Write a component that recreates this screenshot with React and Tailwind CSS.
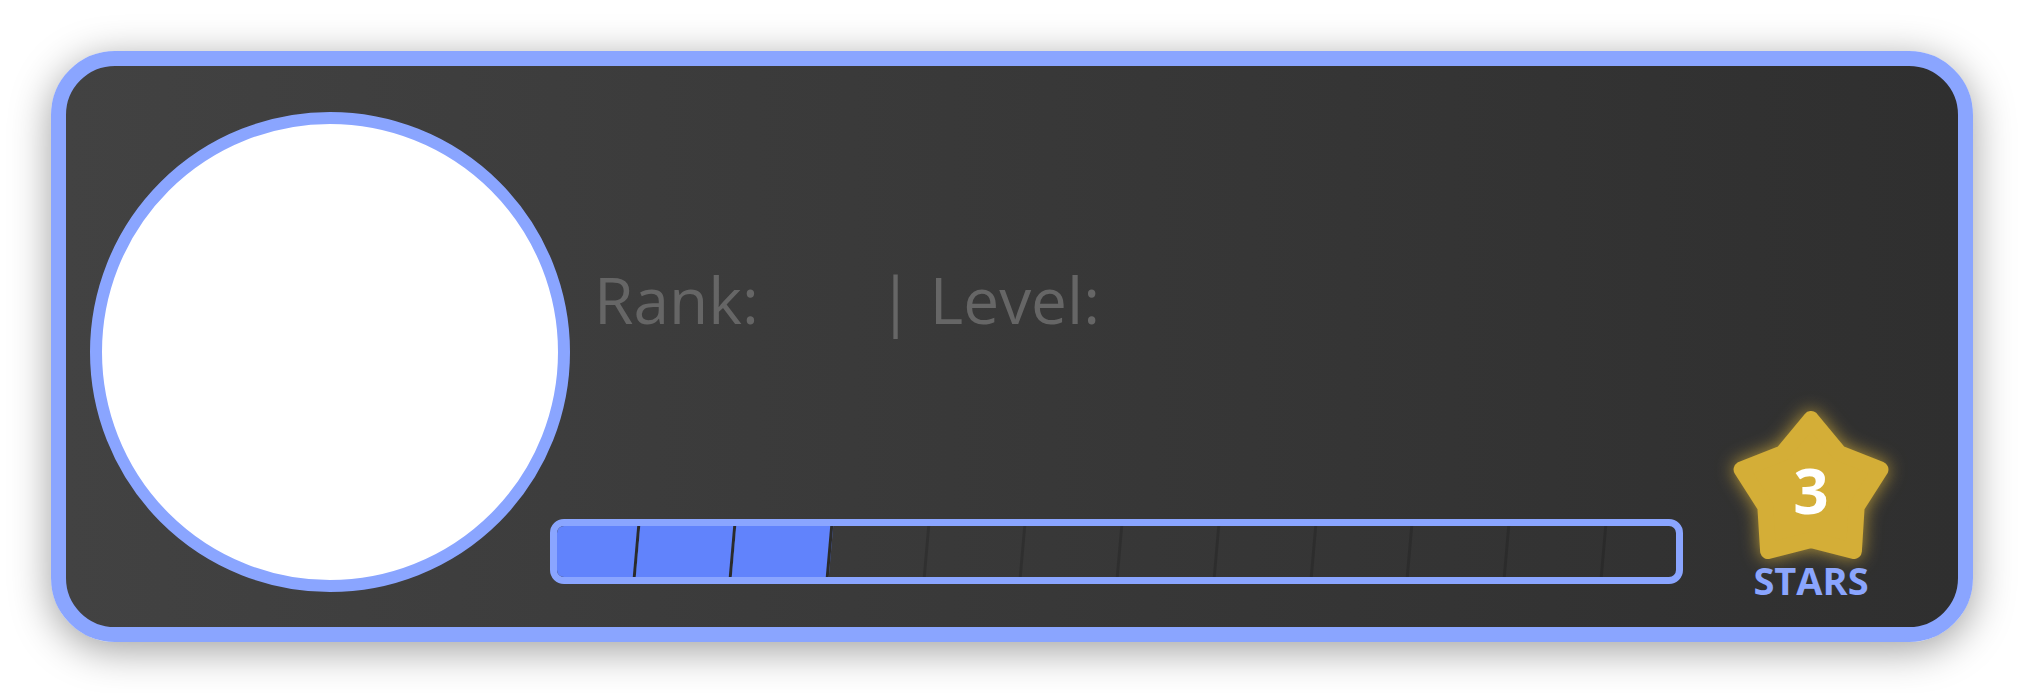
import React from "react";

// rounded five point star, points computed around (0,0)
function starPoints(outer, inner) {
  const pts = [];
  for (let i = 0; i < 10; i++) {
    const a = (i * 36 * Math.PI) / 180;
    const r = i % 2 === 0 ? outer : inner;
    pts.push(`${(Math.sin(a) * r).toFixed(2)},${(-Math.cos(a) * r).toFixed(2)}`);
  }
  return pts.join(" ");
}

function StarBadge({ count }) {
  return (
    <div className="flex flex-col items-center">
      <div className="relative w-[160px] h-[150px]">
        <svg
          width="160"
          height="150"
          viewBox="-80 -83 160 150"
          className="drop-shadow-[0_0_9px_rgba(222,182,58,0.75)]"
        >
          <polygon
            points={starPoints(73, 48)}
            fill="#d4ae37"
            stroke="#d4ae37"
            strokeWidth="16"
            strokeLinejoin="round"
          />
        </svg>
        <div className="absolute left-0 right-0 top-[50px] text-center text-white font-bold text-[62px] leading-none font-['Open_Sans',sans-serif]">
          {count}
        </div>
      </div>
      <div className="mt-[2px] text-[38px] leading-none font-bold text-[#8aa5ff] font-['Open_Sans',sans-serif]">
        STARS
      </div>
    </div>
  );
}

function ProgressBar({ filled, total }) {
  const segments = Array.from({ length: total });
  return (
    <div className="w-[1133px] h-[65px] border-[7px] border-[#8aa5ff] rounded-[14px] overflow-hidden">
      <div className="flex h-full ml-[-16px] -skew-x-5">
        {segments.map((_, i) => (
          <div
            key={i}
            className={
              i < filled
                ? "shrink-0 w-[96.7px] h-full bg-[#6183fc] border-r-[3px] border-[#2b2b2b]"
                : "shrink-0 w-[96.7px] h-full border-r-[3px] border-black/15"
            }
          />
        ))}
      </div>
    </div>
  );
}

export default function App() {
  return (
    <div className="min-h-screen bg-white p-[51px] font-['Open_Sans',sans-serif]">
      <div className="h-[591px] border-[15px] border-[#8aa5ff] rounded-[64px] bg-linear-to-r from-[#424242] to-[#2f2f2f] shadow-[0_8px_40px_rgba(0,0,0,0.38)] overflow-hidden">
        <div className="flex items-start h-full">
          {/* avatar */}
          <div className="ml-[24px] mt-[46px] shrink-0 w-[480px] h-[480px] rounded-full border-[12px] border-[#8aa5ff] bg-white" />

          {/* rank / level + xp bar */}
          <div className="ml-[-20px] w-[1133px] shrink-0 flex flex-col">
            <div className="mt-[202px] pl-[44px] text-[64px] leading-none text-[#666666] whitespace-nowrap">
              <span className="inline-block w-[284px]">Rank:</span>
              <span>| Level:</span>
            </div>
            <div className="mt-[187px]">
              <ProgressBar filled={3} total={12} />
            </div>
          </div>

          {/* stars */}
          <div className="w-[256px] shrink-0 mt-[343px]">
            <StarBadge count={3} />
          </div>
        </div>
      </div>
    </div>
  );
}
